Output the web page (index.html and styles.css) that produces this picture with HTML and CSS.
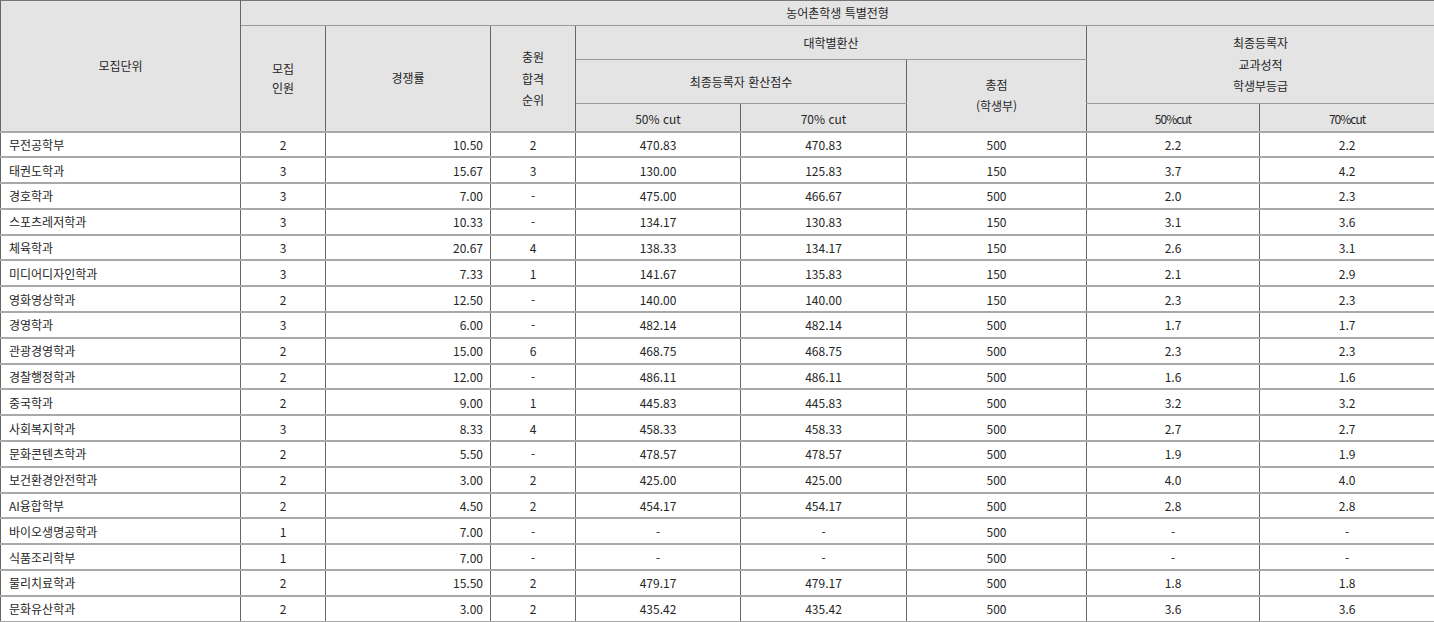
FILE: index.html
```html
<!DOCTYPE html>
<html lang="ko">
<head>
<meta charset="utf-8">
<link rel="stylesheet" href="styles.css">
</head>
<body>
<table class="grid">
  <colgroup>
    <col class="c-unit"><col class="c-num"><col class="c-rate"><col class="c-num">
    <col class="c-score"><col class="c-score2"><col class="c-total"><col class="c-grade"><col class="c-grade2">
  </colgroup>
  <thead>
    <tr class="h1">
      <th rowspan="4">모집단위</th>
      <th colspan="8">농어촌학생 특별전형</th>
    </tr>
    <tr class="h2">
      <th rowspan="3" class="tight">모집<br>인원</th>
      <th rowspan="3">경쟁률</th>
      <th rowspan="3" class="multi">충원<br>합격<br>순위</th>
      <th colspan="3">대학별환산</th>
      <th colspan="2" rowspan="2" class="multi">최종등록자<br>교과성적<br>학생부등급</th>
    </tr>
    <tr class="h3">
      <th colspan="2">최종등록자 환산점수</th>
      <th rowspan="2" class="multi">총점<br>(학생부)</th>
    </tr>
    <tr class="h4">
      <th>50% cut</th>
      <th>70% cut</th>
      <th class="cond">50%cut</th>
      <th class="cond">70%cut</th>
    </tr>
  </thead>
  <tbody>
    <tr><td class="name">무전공학부</td><td>2</td><td class="r">10.50</td><td>2</td><td>470.83</td><td>470.83</td><td>500</td><td>2.2</td><td>2.2</td></tr>
    <tr><td class="name">태권도학과</td><td>3</td><td class="r">15.67</td><td>3</td><td>130.00</td><td>125.83</td><td>150</td><td>3.7</td><td>4.2</td></tr>
    <tr><td class="name">경호학과</td><td>3</td><td class="r">7.00</td><td>-</td><td>475.00</td><td>466.67</td><td>500</td><td>2.0</td><td>2.3</td></tr>
    <tr><td class="name">스포츠레저학과</td><td>3</td><td class="r">10.33</td><td>-</td><td>134.17</td><td>130.83</td><td>150</td><td>3.1</td><td>3.6</td></tr>
    <tr><td class="name">체육학과</td><td>3</td><td class="r">20.67</td><td>4</td><td>138.33</td><td>134.17</td><td>150</td><td>2.6</td><td>3.1</td></tr>
    <tr><td class="name">미디어디자인학과</td><td>3</td><td class="r">7.33</td><td>1</td><td>141.67</td><td>135.83</td><td>150</td><td>2.1</td><td>2.9</td></tr>
    <tr><td class="name">영화영상학과</td><td>2</td><td class="r">12.50</td><td>-</td><td>140.00</td><td>140.00</td><td>150</td><td>2.3</td><td>2.3</td></tr>
    <tr><td class="name">경영학과</td><td>3</td><td class="r">6.00</td><td>-</td><td>482.14</td><td>482.14</td><td>500</td><td>1.7</td><td>1.7</td></tr>
    <tr><td class="name">관광경영학과</td><td>2</td><td class="r">15.00</td><td>6</td><td>468.75</td><td>468.75</td><td>500</td><td>2.3</td><td>2.3</td></tr>
    <tr><td class="name">경찰행정학과</td><td>2</td><td class="r">12.00</td><td>-</td><td>486.11</td><td>486.11</td><td>500</td><td>1.6</td><td>1.6</td></tr>
    <tr><td class="name">중국학과</td><td>2</td><td class="r">9.00</td><td>1</td><td>445.83</td><td>445.83</td><td>500</td><td>3.2</td><td>3.2</td></tr>
    <tr><td class="name">사회복지학과</td><td>3</td><td class="r">8.33</td><td>4</td><td>458.33</td><td>458.33</td><td>500</td><td>2.7</td><td>2.7</td></tr>
    <tr><td class="name">문화콘텐츠학과</td><td>2</td><td class="r">5.50</td><td>-</td><td>478.57</td><td>478.57</td><td>500</td><td>1.9</td><td>1.9</td></tr>
    <tr><td class="name">보건환경안전학과</td><td>2</td><td class="r">3.00</td><td>2</td><td>425.00</td><td>425.00</td><td>500</td><td>4.0</td><td>4.0</td></tr>
    <tr><td class="name">AI융합학부</td><td>2</td><td class="r">4.50</td><td>2</td><td>454.17</td><td>454.17</td><td>500</td><td>2.8</td><td>2.8</td></tr>
    <tr><td class="name">바이오생명공학과</td><td>1</td><td class="r">7.00</td><td>-</td><td>-</td><td>-</td><td>500</td><td>-</td><td>-</td></tr>
    <tr><td class="name">식품조리학부</td><td>1</td><td class="r">7.00</td><td>-</td><td>-</td><td>-</td><td>500</td><td>-</td><td>-</td></tr>
    <tr><td class="name">물리치료학과</td><td>2</td><td class="r">15.50</td><td>2</td><td>479.17</td><td>479.17</td><td>500</td><td>1.8</td><td>1.8</td></tr>
    <tr><td class="name">문화유산학과</td><td>2</td><td class="r">3.00</td><td>2</td><td>435.42</td><td>435.42</td><td>500</td><td>3.6</td><td>3.6</td></tr>
  </tbody>
</table>
</body>
</html>
```

FILE: styles.css
```css
html, body {
  margin: 0;
  padding: 0;
  background: #ffffff;
}

.grid {
  border-collapse: collapse;
  table-layout: fixed;
  width: 1434px;
  font-family: "Noto Sans CJK KR", "Noto Sans", sans-serif;
  font-size: 12px;
  color: #262626;
}

.c-unit { width: 240px; }
.c-num { width: 85px; }
.c-rate { width: 165px; }
.c-score { width: 165px; }
.c-score2 { width: 166px; }
.c-total { width: 180px; }
.c-grade { width: 173px; }
.c-grade2 { width: 175px; }

.grid th,
.grid td {
  border-left: 1px solid #666666;
  border-right: 1px solid #666666;
  border-top: 1px solid #9a9a9a;
  border-bottom: 1px solid #9a9a9a;
  padding: 0 6px;
  text-align: center;
  vertical-align: middle;
  line-height: 16px;
  white-space: nowrap;
}

.grid thead th {
  background: #e4e4e4;
  font-weight: normal;
}

.grid thead tr.h1 th { border-top-color: #777777; }

.h1 { height: 25px; }
.h2 { height: 34px; }
.h3 { height: 44px; }
.h4 { height: 28px; }

.grid tr.h4 th { padding-top: 3px; }

.grid th.multi { line-height: 21.5px; }
.grid th.tight { line-height: 19px; }
.grid th.cond { letter-spacing: -1px; }

.grid tbody td {
  border-top: 2px solid #a8a8a8;
  border-bottom: 2px solid #a8a8a8;
  padding-top: 1px;
}

.grid tbody tr { height: 25.8px; }

.grid td.name {
  text-align: left;
  padding-left: 8px;
}

.grid td.r {
  text-align: right;
  padding-right: 7px;
}
```
